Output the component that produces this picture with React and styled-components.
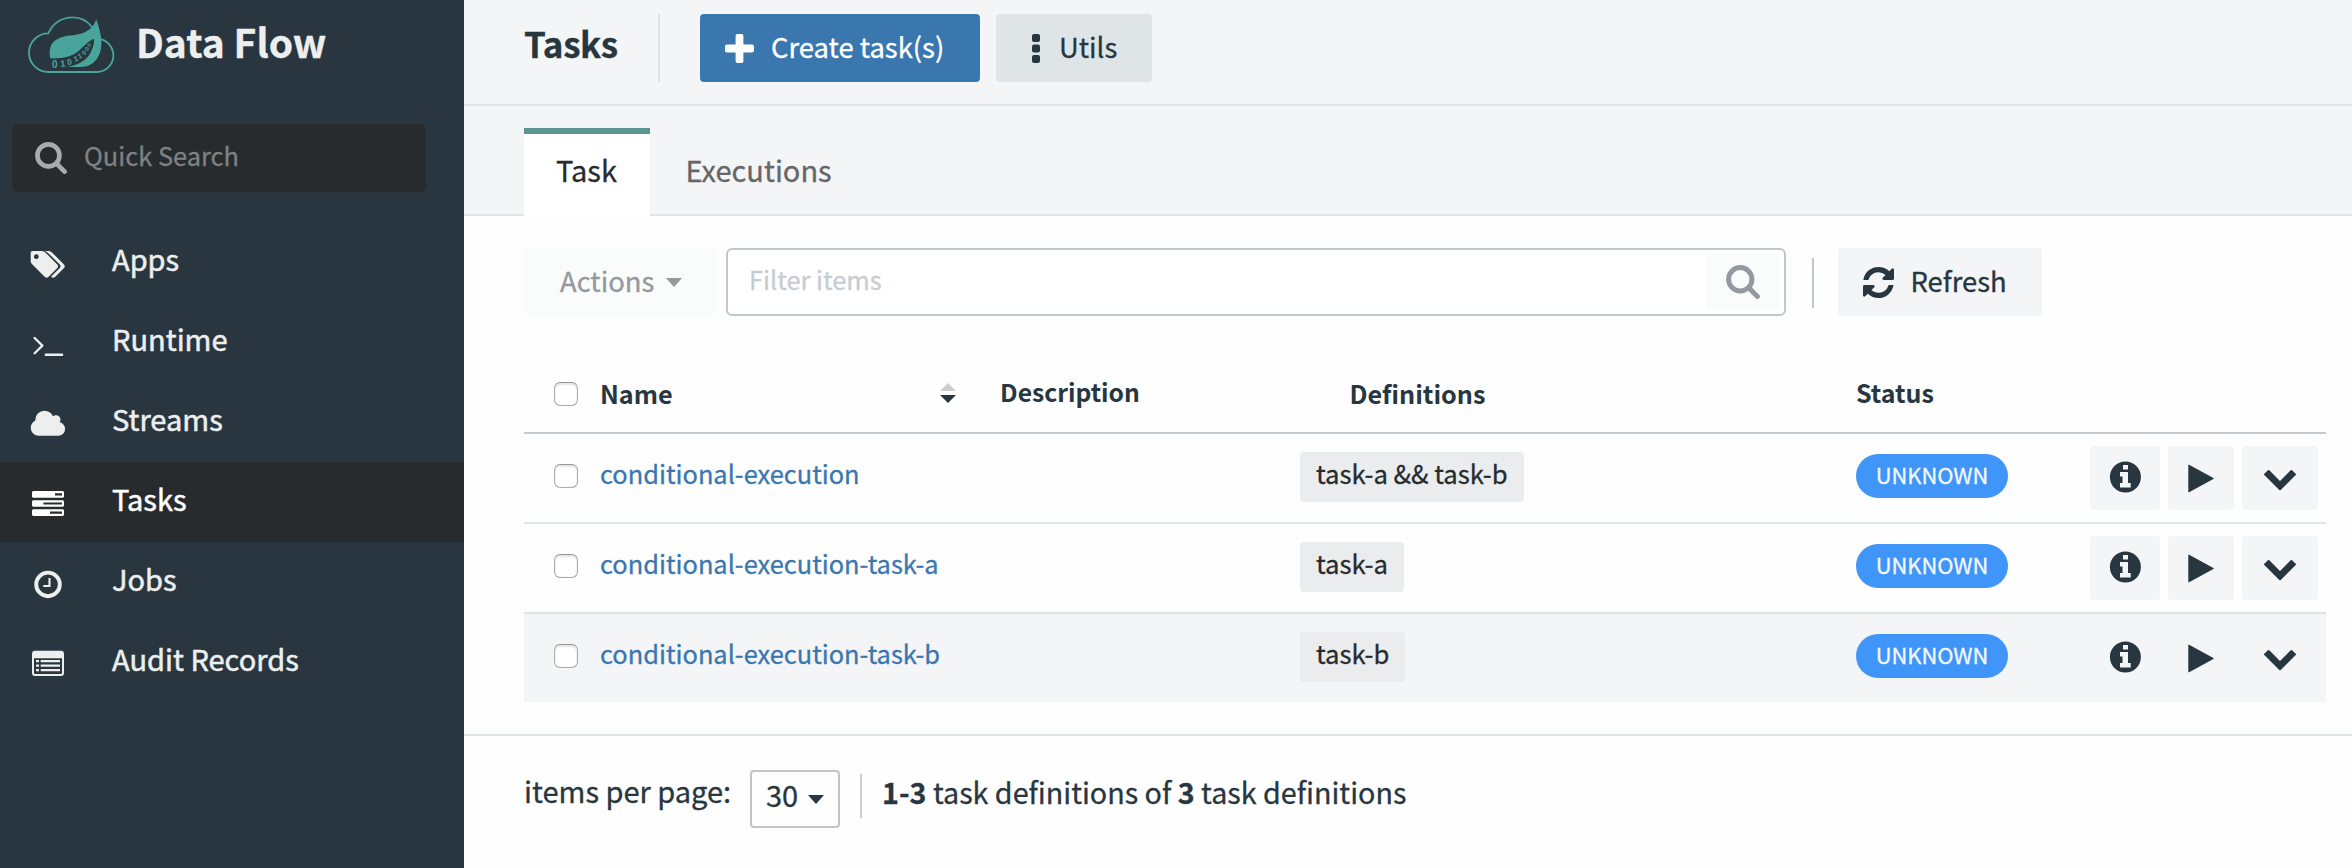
import React from 'react';
import styled, { createGlobalStyle, ThemeProvider } from 'styled-components';

const theme = {
  ink: '#28363f',
  sidebar: '#29363f',
  dark: '#272b2e',
  pale: '#f4f5f7',
  line: '#dfe4e7',
  link: '#3a77af',
  teal: '#49a49c',
};

const GlobalStyle = createGlobalStyle`
  * { box-sizing: border-box; }
  body {
    margin: 0;
    background: #fefefe;
    color: ${theme.ink};
    font-family: "Noto Sans CJK SC", "Noto Sans", sans-serif;
    font-size: 25.4px;
    line-height: 1.2;
    -webkit-text-stroke: 0.3px;
  }
  svg { -webkit-text-stroke: 0; }
`;

const Page = styled.div`
  display: flex;
  height: 868px;
  overflow: hidden;
`;

/* ---------- Sidebar ---------- */

const Sidebar = styled.aside`
  width: 464px;
  flex: none;
  background: ${(p) => p.theme.sidebar};
  color: #edefef;
`;

const Brand = styled.div`
  display: flex;
  height: 124px;
  padding: 8px 0 0 20px;
`;

const BrandName = styled.h1`
  margin: 0 0 0 12px;
  font-size: 39px;
  font-weight: 700;
  line-height: 66px;
`;

const QuickSearch = styled.div`
  display: flex;
  align-items: center;
  width: 414px;
  height: 68px;
  margin: 0 0 30px 12px;
  padding-left: 23px;
  border-radius: 6px;
  background: ${(p) => p.theme.dark};
  color: #7e8283;
`;

const QuickIcon = styled.span`
  color: #a9abac;
`;

const QuickLabel = styled.span`
  margin-left: 17px;
  padding-bottom: 6px;
`;

const NavItem = styled.a`
  display: flex;
  align-items: center;
  height: 80px;
  padding: 0 0 0 28px;
  font-size: 29px;
  background: ${(p) => (p.$active ? p.theme.dark : 'transparent')};
  color: ${(p) => (p.$active ? '#ffffff' : '#edefef')};
  -webkit-text-stroke: 0.5px;
`;

const NavIcon = styled.svg`
  width: 40px;
  height: 40px;
  margin: 4px 44px 0 0;
  fill: currentColor;
`;

const NavLabel = styled.span`
  padding-bottom: 8px;
`;

/* ---------- Main ---------- */

const Main = styled.main`
  flex: 1;
  min-width: 0;
`;

const Header = styled.header`
  display: flex;
  height: 106px;
  padding: 14px 0 0 60px;
  background: ${(p) => p.theme.pale};
  border-bottom: 2px solid ${(p) => p.theme.line};
`;

const Title = styled.h2`
  width: 134px;
  margin: 0;
  font-size: 35px;
  font-weight: 700;
  line-height: 58px;
  letter-spacing: -0.4px;
`;

const HeaderRule = styled.div`
  width: 2px;
  height: 68px;
  margin-right: 40px;
  background: ${(p) => p.theme.line};
`;

const looks = {
  primary: 'background: #3a77af; color: #ffffff;',
  grey: 'background: #dfe5e7; color: #28363f;',
  light: 'background: #f4f5f7; color: #28363f;',
  disabled: 'background: #fafbfb; color: #93999e;',
};

const Button = styled.button`
  display: flex;
  align-items: center;
  flex: none;
  width: ${(p) => p.$width}px;
  height: 68px;
  margin: 0;
  padding: 0 0 0 ${(p) => p.$inset}px;
  border: 0;
  border-radius: 4px;
  font: inherit;
  font-size: 27.4px;
  ${(p) => looks[p.$look]}
`;

const ButtonLabel = styled.span`
  padding-bottom: 3px;
  white-space: nowrap;
`;

const ActionsLabel = styled(ButtonLabel)`
  margin-right: 12px;
`;

const HeaderGap = styled.div`
  width: 16px;
  flex: none;
`;

const Glyph = styled.svg`
  display: block;
  flex: none;
  width: ${(p) => p.$w}px;
  height: ${(p) => p.$h}px;
  margin-right: ${(p) => p.$gap || 0}px;
  fill: currentColor;
`;

const Tabs = styled.nav`
  display: flex;
  height: 110px;
  padding: 22px 0 0 60px;
  background: linear-gradient(${(p) => p.theme.pale} 108px, ${(p) => p.theme.line} 108px);
`;

const Tab = styled.a`
  width: ${(p) => p.$width}px;
  height: 88px;
  padding-left: ${(p) => (p.$active ? 32 : 35.5)}px;
  border-top: 6px solid ${(p) => (p.$active ? '#5a968f' : 'transparent')};
  background: ${(p) => (p.$active ? '#ffffff' : 'transparent')};
  color: ${(p) => (p.$active ? '#272b2e' : '#666666')};
  font-size: 29px;
  line-height: 70px;
`;

const Toolbar = styled.div`
  display: flex;
  height: 140px;
  padding: 32px 0 0 60px;
`;

const Filter = styled.div`
  display: flex;
  align-items: center;
  justify-content: space-between;
  width: 1060px;
  height: 68px;
  margin: 0 26px 0 10px;
  padding: 0 4px 0 21px;
  border: 2px solid #c2c7cb;
  border-radius: 6px;
  background: #ffffff;
  color: #c6ccd2;
`;

const FilterHint = styled.span`
  padding-bottom: 6px;
`;

const FilterButton = styled.div`
  display: flex;
  align-items: center;
  justify-content: center;
  width: 74px;
  height: 56px;
  border-radius: 3px;
  background: #fafbfb;
  color: #93999e;
`;

const ToolbarRule = styled.div`
  width: 2px;
  height: 50px;
  margin: 10px 24px 0 0;
  background: #c2c7cb;
`;

/* ---------- Table ---------- */

const Table = styled.section`
  width: 1802px;
  height: 378px;
  margin-left: 60px;
`;

const Row = styled.div`
  display: grid;
  grid-template-columns: 76px 400px 300px 556px 234px 1fr;
  align-items: center;
  height: ${(p) => (p.$head ? 76 : 90)}px;
  border-top: ${(p) => (p.$head ? 0 : 2)}px solid ${(p) => (p.$first ? '#c4cad0' : p.theme.line)};
  background: ${(p) => (p.$shaded ? p.theme.pale : 'transparent')};
`;

const Checkbox = styled.span`
  width: 24px;
  height: 24px;
  margin: 0 0 ${(p) => (p.$head ? 0 : 4)}px 30px;
  border: 1px solid #adadad;
  border-top-color: #969696;
  border-radius: 6px;
  background: #ffffff;
  box-shadow: inset 0 2px 2px #e4e4e4, inset 0 0 1px #bbbbbb;
`;

const HeadCell = styled.span`
  display: flex;
  align-items: center;
  justify-content: space-between;
  font-weight: 700;
  padding: 0 44px ${(p) => p.$lift}px ${(p) => p.$indent || 0}px;
  font-size: ${(p) => p.$size || 25.2}px;
  -webkit-text-stroke: 0;
`;

const TaskLink = styled.a`
  padding-bottom: 9px;
  color: ${(p) => p.theme.link};
`;

const Chip = styled.span`
  justify-self: start;
  height: 50px;
  margin-bottom: 2px;
  padding: 0 16px;
  border-radius: 4px;
  background: #ebecee;
  color: #272b2e;
  font-size: 25.7px;
  line-height: 41px;
`;

const Badge = styled.span`
  justify-self: start;
  width: 152px;
  height: 44px;
  margin-bottom: 4px;
  border-radius: 22px;
  background: #4095f8;
  color: #f3f8ff;
  font-size: 21.9px;
  line-height: 41px;
  text-align: center;
`;

const Actions = styled.div`
  display: flex;
`;

const IconButton = styled.button`
  display: block;
  width: ${(p) => p.$width}px;
  height: 64px;
  margin: 0 ${(p) => p.$gap}px 0 0;
  padding: 0;
  border: 0;
  border-radius: 4px;
  background: ${(p) => p.theme.pale};
  color: ${(p) => p.theme.ink};
`;

/* ---------- Footer ---------- */

const Footer = styled.footer`
  display: flex;
  height: 134px;
  padding: 34px 0 0 60px;
  border-top: 2px solid ${(p) => p.theme.line};
  font-size: 29px;
`;

const PageLabel = styled.span`
  width: 224px;
  padding-top: 1px;
  line-height: 38px;
`;

const PageSelect = styled.div`
  display: flex;
  align-items: center;
  width: 90px;
  height: 58px;
  margin: 0 20px 0 2px;
  padding-left: 14px;
  border: 2px solid #c4c4c4;
  border-radius: 4px;
`;

const PageSize = styled.span`
  width: 42px;
  padding-bottom: 10px;
`;

const FooterRule = styled.div`
  width: 2px;
  height: 44px;
  margin: 4px 20px 0 0;
  background: #cccccc;
`;

const Summary = styled.span`
  font-size: 28.7px;
  line-height: 43px;
`;

/* ---------- Drawings ---------- */

const digits = [
  [104, 179, 30, 0, '0'],
  [129, 176, 27, -4, '1'],
  [150, 170, 25, -12, '0'],
  [170, 160, 23, -20, '1'],
  [183, 150, 21, -28, '1'],
  [196, 139, 19, -38, '0'],
  [205, 127, 18, -46, '0'],
  [212, 115, 16, -54, '0'],
];

const Logo = () => (
  <svg width="104" height="72" viewBox="0 0 312 216" fill={theme.teal}>
    <g fill="none" stroke={theme.teal} strokeWidth="5.5" strokeLinecap="round">
      <path d="M216 58C203 39 183 28 158 28C124 28 97 47 85 76A58 58 0 0 0 85 192H232A50 50 0 0 0 244 94" />
    </g>
    <path d="M229 34C241 70 250 104 240 134C230 162 208 177 180 177H138C168 173 200 160 213 131C219 118 223 106 222 92C204 98 190 118 172 132C150 148 122 152 91 151C87 132 89 112 101 101C117 86 141 83 168 80C194 77 219 64 229 34Z" />
    {digits.map(([x, y, size, turn, d]) => (
      <text
        key={x}
        x={x}
        y={y}
        fontSize={size}
        fontWeight="700"
        fontFamily="Liberation Sans, sans-serif"
        textAnchor="middle"
        transform={`rotate(${turn} ${x} ${y})`}
      >
        {d}
      </text>
    ))}
  </svg>
);

const SearchIcon = ({ size }) => (
  <Glyph $w={size} $h={size} viewBox="0 0 30 30">
    <circle cx="12.6" cy="12.6" r="10.3" fill="none" stroke="currentColor" strokeWidth="4.4" />
    <path d="M20.5 20.5L27.7 27.7" stroke="currentColor" strokeWidth="4.4" strokeLinecap="round" />
  </Glyph>
);

const CaretDown = () => (
  <Glyph $w={16} $h={9} viewBox="0 0 16 9">
    <path d="M0 0H16L8 9Z" />
  </Glyph>
);

const navIcons = {
  Apps: (
    <>
      <path
        fillRule="evenodd"
        d="M4.6 7H13.4C15 7 16.5 7.7 17.6 8.7L29.3 20.4C30.4 21.5 30.4 23 29.3 24L20.4 33C19.4 34 17.9 34 16.9 33L4.4 20.6C3.3 19.5 2.7 18.2 2.7 16.7V9C2.7 7.9 3.5 7 4.6 7ZM8.3 10.3A2.4 2.4 0 1 0 8.3 15.1A2.4 2.4 0 1 0 8.3 10.3Z"
      />
      <path d="M16.4 7H20C21.6 7 23 7.6 24.2 8.7L36 20.4C37 21.5 37 23 36 24L27 33C26 34 24.6 34 23.6 33.3L23.2 32.6L31.8 24C32.9 23 32.9 21.5 31.8 20.4L20 8.9C19 7.9 17.8 7.3 16.4 7Z" />
    </>
  ),
  Runtime: (
    <>
      <path
        d="M6.6 14L14.4 21.6L6.6 29.3"
        fill="none"
        stroke="currentColor"
        strokeWidth="2.3"
        strokeLinecap="round"
        strokeLinejoin="round"
      />
      <rect x="16.8" y="29.6" width="18.3" height="2.4" rx=".6" />
    </>
  ),
  Streams: (
    <path
      transform="translate(1.6 4.4) scale(.01788)"
      d="M1984 1152q0 159-112.500 271.500t-271.500 112.500h-1088q-185 0-316.500-131.500t-131.500-316.500q0-132 71-241.500t187-163.500q-2-28-2-43 0-212 150-362t362-150q158 0 286.500 88t187.500 230q70-62 166-62 106 0 181 75t75 181q0 75-41 138 129 30 213 134.500t84 239.500z"
    />
  ),
  Tasks: (
    <path
      fillRule="evenodd"
      d="M5 7H35L36 8V12.700L35 13.700H5L4 12.700V8ZM27 9.200V11.400H34V9.200ZM5 16.200H35L36 17.200V21.800L35 22.800H5L4 21.800V17.200ZM15.400 18.400V20.600H34V18.400ZM5 25.300H35L36 26.300V31L35 32H5L4 31V26.300ZM22 27.500V29.700H34V27.500Z"
    />
  ),
  Jobs: (
    <g fill="none" stroke="currentColor">
      <circle cx="20" cy="20.400" r="11.800" strokeWidth="3.900" />
      <path d="M21.500 14V22H15.300" strokeWidth="2.100" />
    </g>
  ),
  'Audit Records': (
    <>
      <path
        fillRule="evenodd"
        d="M7 6.800H33Q36 6.800 36 9.800V29Q36 32 33 32H7Q4 32 4 29V9.800Q4 6.800 7 6.800ZM6 14.200V29Q6 30 7 30H33Q34 30 34 29V14.200Z"
      />
      <path d="M8 16H11V18.300H8ZM12.700 16H32V18.300H12.700ZM8 20.500H11V22.800H8ZM12.700 20.500H32V22.800H12.700ZM8 25H11V27.300H8ZM12.700 25H32V27.300H12.700Z" />
    </>
  ),
};

const REFRESH =
  'M1639 1056q0 5-1 7-64 268-268 434.500t-478 166.500q-146 0-282.500-55t-243.500-157l-129 129q-19 19-45 19t-45-19-19-45v-448q0-26 19-45t45-19h448q26 0 45 19t19 45-19 45l-137 137q71 66 161 102t187 36q134 0 250-65t186-179q11-17 53-117 8-23 30-23h192q13 0 22.500 9.500t9.500 22.500zm25-800v448q0 26-19 45t-45 19h-448q-26 0-45-19t-19-45 19-45l138-138q-148-137-349-137-134 0-250 65t-186 179q-11 17-53 117-8 23-30 23h-199q-13 0-22.500-9.500t-9.500-22.500v-7q65-268 270-434.500t480-166.500q146 0 284 55.500t245 156.500l130-129q19-19 45-19t45 19 19 45z';

const RowActions = () => (
  <Actions>
    <IconButton $width={70} $gap={8}>
      <Glyph $w={70} $h={64} viewBox="0 0 70 64">
        <path
          fillRule="evenodd"
          d="M35.400 15.500A15.500 15.500 0 1 0 35.400 46.500A15.500 15.500 0 1 0 35.400 15.500ZM33 19H38V23.400H33ZM30 26H38V37H40.700V41.500H30V37H32.500V30.500H30Z"
        />
      </Glyph>
    </IconButton>
    <IconButton $width={66} $gap={8}>
      <Glyph $w={66} $h={64} viewBox="0 0 66 64">
        <path d="M20.300 19.200Q20.300 18.300 21.100 18.800L45.400 31.900Q46.200 32.500 45.400 33L21.100 46.200Q20.300 46.600 20.300 45.700Z" />
      </Glyph>
    </IconButton>
    <IconButton $width={76} $gap={0}>
      <Glyph $w={76} $h={64} viewBox="0 0 76 64">
        <path
          d="M23 28.400L26.600 25L38 36.500L49.400 25L53 28.400L38 43.200Z"
          stroke="currentColor"
          strokeWidth="2"
          strokeLinejoin="round"
        />
      </Glyph>
    </IconButton>
  </Actions>
);

const tasks = [
  { name: 'conditional-execution', definition: 'task-a && task-b' },
  { name: 'conditional-execution-task-a', definition: 'task-a' },
  { name: 'conditional-execution-task-b', definition: 'task-b' },
];

export default function App() {
  return (
    <ThemeProvider theme={theme}>
      <GlobalStyle />
      <Page>
        <Sidebar>
          <Brand>
            <Logo />
            <BrandName>Data Flow</BrandName>
          </Brand>
          <QuickSearch>
            <QuickIcon>
              <SearchIcon size={32} />
            </QuickIcon>
            <QuickLabel>Quick Search</QuickLabel>
          </QuickSearch>
          {Object.keys(navIcons).map((label) => (
            <NavItem key={label} $active={label === 'Tasks'}>
              <NavIcon viewBox="0 0 40 40">{navIcons[label]}</NavIcon>
              <NavLabel>{label}</NavLabel>
            </NavItem>
          ))}
        </Sidebar>
        <Main>
          <Header>
            <Title>Tasks</Title>
            <HeaderRule />
            <Button $look="primary" $width={280} $inset={25}>
              <Glyph $w={29} $h={29} $gap={17} viewBox="0 0 29 29">
                <path d="M12.500 0H16.500Q18.400 0 18.400 2V10.600H27Q29 10.600 29 12.500V16.500Q29 18.400 27 18.400H18.400V27Q18.400 29 16.500 29H12.500Q10.600 29 10.600 27V18.400H2Q0 18.400 0 16.500V12.500Q0 10.600 2 10.600H10.600V2Q10.600 0 12.500 0Z" />
              </Glyph>
              <ButtonLabel>Create task(s)</ButtonLabel>
            </Button>
            <HeaderGap />
            <Button $look="grey" $width={156} $inset={36}>
              <Glyph $w={8} $h={29} $gap={19} viewBox="0 0 8 29">
                <rect width="8" height="8" rx="2" />
                <rect y="10.500" width="8" height="8" rx="2" />
                <rect y="21" width="8" height="8" rx="2" />
              </Glyph>
              <ButtonLabel>Utils</ButtonLabel>
            </Button>
          </Header>
          <Tabs>
            <Tab $active $width={126}>Task</Tab>
            <Tab $width={220}>Executions</Tab>
          </Tabs>
          <Toolbar>
            <Button $look="disabled" $width={192} $inset={36}>
              <ActionsLabel>Actions</ActionsLabel>
              <CaretDown />
            </Button>
            <Filter>
              <FilterHint>Filter items</FilterHint>
              <FilterButton>
                <SearchIcon size={34} />
              </FilterButton>
            </Filter>
            <ToolbarRule />
            <Button $look="light" $width={204} $inset={25}>
              <Glyph $w={31} $h={31} $gap={16.500} viewBox="128 128 1536 1536">
                <path d={REFRESH} />
              </Glyph>
              <ButtonLabel>Refresh</ButtonLabel>
            </Button>
          </Toolbar>
          <Table>
            <Row $head>
              <Checkbox $head />
              <HeadCell $lift={1}>
                Name
                <Glyph $w={16} $h={20} viewBox="0 0 16 20">
                  <path d="M0 8H16L8 0Z" fill="#cccccc" />
                  <path d="M0 12H16L8 20Z" />
                </Glyph>
              </HeadCell>
              <HeadCell $lift={5} $size={24.700}>Description</HeadCell>
              <HeadCell $lift={1} $indent={49.500}>
                Definitions
              </HeadCell>
              <HeadCell $lift={5} $size={25}>Status</HeadCell>
            </Row>
            {tasks.map((task, i) => (
              <Row key={task.name} $first={i === 0} $shaded={i === 2}>
                <Checkbox />
                <TaskLink>{task.name}</TaskLink>
                <span />
                <Chip>{task.definition}</Chip>
                <Badge>UNKNOWN</Badge>
                <RowActions />
              </Row>
            ))}
          </Table>
          <Footer>
            <PageLabel>items per page:</PageLabel>
            <PageSelect>
              <PageSize>30</PageSize>
              <CaretDown />
            </PageSelect>
            <FooterRule />
            <Summary>
              <b>1-3</b> task definitions of <b>3</b> task definitions
            </Summary>
          </Footer>
        </Main>
      </Page>
    </ThemeProvider>
  );
}
